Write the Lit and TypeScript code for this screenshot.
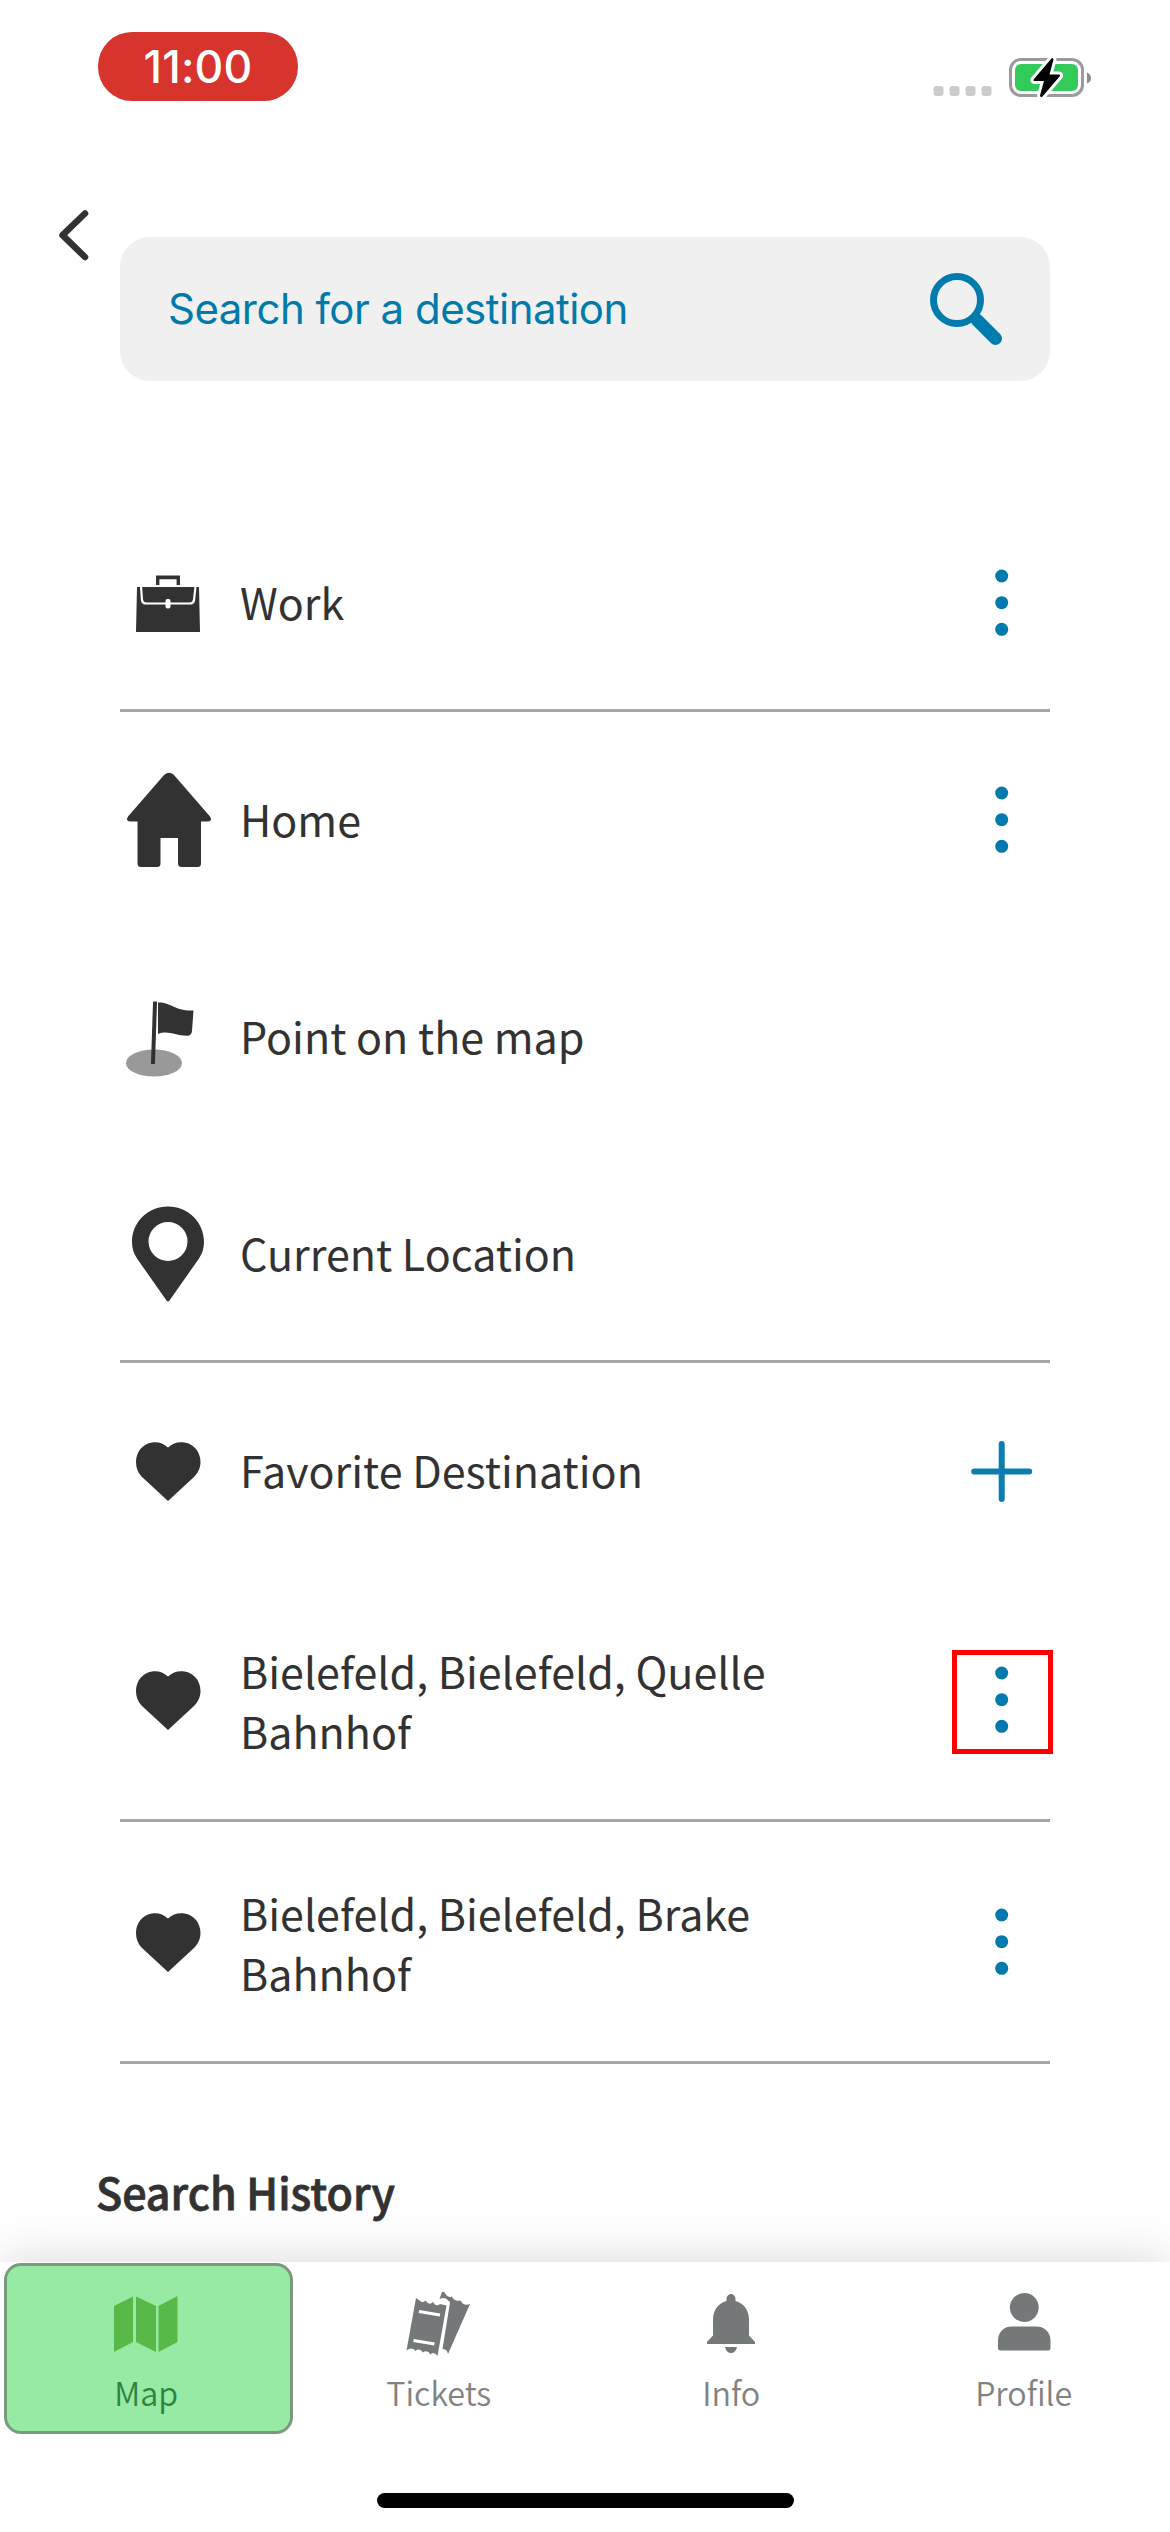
import { LitElement, html, css, svg, TemplateResult } from "lit";
import { customElement } from "lit/decorators.js";
import { classMap } from "lit/directives/class-map.js";

type Action = "menu" | "add" | "none";

interface Entry {
  icon: keyof typeof glyphs;
  label: string;
  action: Action;
  divider?: boolean;
  marked?: boolean;
}

const glyphs = {
  work: svg`
    <path d="M36 37V27.5H60V37H56.6V31.2H39.4V37Z" />
    <path d="M17 39H79L80 84H16Z" />
    <path d="M21 38.5L22 52Q22.5 55.5 26 55.5H70Q73.500 55.5 74 52L75.500 38.5" fill="none" stroke="#fff" stroke-width="2.200" />
    <rect x="45.500" y="51" width="5" height="9.500" rx="2" fill="#fff" />`,
  home: svg`
    <path d="M44.500 9.500Q49 6 53.500 9.500L90 51.500Q93 56.500 87 56.500H81V98.500Q81 102 77.500 102H62Q58 102 58 98.500V73H40.500V98.500Q40.500 102 37 102H21Q17.500 102 17.500 98.500V56.500H11Q5 56.500 8 51.500Z" />`,
  flag: svg`
    <ellipse cx="34" cy="81" rx="28" ry="13.500" fill="#999" />
    <path d="M35 21.500L33 80" stroke="#323232" stroke-width="4" stroke-linecap="square" fill="none" />
    <path d="M38 20.500C51 20 55 29.500 73.500 28.500L72 49Q71.500 54 67 53.800C55 53.500 48 48 38 52Z" />`,
  pin: svg`
    <path fill-rule="evenodd" d="M48 7.500C28 7.500 12 23 12 43C12 49 13.500 54 17 59.500L46.500 101.500Q48 103.500 49.500 101.500L79 59.500C82.500 54 84 49 84 43C84 23 68 7.500 48 7.500ZM48 23A19.500 19.500 0 1 1 48 62A19.500 19.500 0 1 1 48 23Z" />`,
  heart: svg`
    <path d="M48 31.500C43 26.500 37 25.500 32 26.500C22.500 28 16 36 16 46C16 52 18 56.500 21.500 60.500L48 85L74.500 60.500C78 56.500 80.500 52 80.500 46C80.500 36 74 28 64.500 26.500C59 25.500 53 26.500 48 31.500Z" />`,
};

const actions: Record<Exclude<Action, "none">, TemplateResult> = {
  menu: svg`
    <circle cx="47.700" cy="28" r="6.500" />
    <circle cx="47.700" cy="54.700" r="6.500" />
    <circle cx="47.700" cy="81.300" r="6.500" />` as unknown as TemplateResult,
  add: svg`
    <path d="M47.700 28V83M20.200 55.500H75.200" stroke="#0a7eb0" stroke-width="6" stroke-linecap="round" fill="none" />` as unknown as TemplateResult,
};

const entries: Entry[] = [
  { icon: "work", label: "Work", action: "menu", divider: true },
  { icon: "home", label: "Home", action: "menu" },
  { icon: "flag", label: "Point on the map", action: "none" },
  { icon: "pin", label: "Current Location", action: "none", divider: true },
  { icon: "heart", label: "Favorite Destination", action: "add" },
  { icon: "heart", label: "Bielefeld, Bielefeld, Quelle Bahnhof", action: "menu", divider: true, marked: true },
  { icon: "heart", label: "Bielefeld, Bielefeld, Brake Bahnhof", action: "menu", divider: true },
];

const tabs = [
  {
    label: "Map",
    icon: svg`
      <path d="M8 24L27 14.500V60L8 70Z" />
      <path d="M30 14.500L50 24V70L30 60Z" />
      <path d="M52.500 24L71.500 14V60L52.500 70Z" />`,
  },
  {
    label: "Tickets",
    icon: svg`
      <path d="M43 10Q45.500 9 46.500 12Q49 16.500 53 14.500Q55.500 20 61.500 18.500Q64.500 24.500 71 22L49 72Q48 67 43.500 67L51 20.500Q51 19 49.500 19Q47 14.500 40.500 17Z" />
      <path d="M17 16L20 18Q23.500 22 26.500 18.500Q30 24 34 20Q37 25.500 41 22L47.500 23.500L38.500 74Q35 69 31.500 72.500Q28 67 24 70.500Q20.500 65.500 16.500 69Q13 64.500 7.500 68.500Z" />
      <path d="M20 29.500L41 33M14.500 58.500L35.500 62" stroke="#fff" stroke-width="3.200" fill="none" />`,
  },
  {
    label: "Info",
    icon: svg`
      <path d="M35.500 19V17A4.500 5 0 0 1 44.500 17V19C52.500 21 58 28 58 37.500V53.500L64 60V62H16V60L22 53.500V37.500C22 28 27.500 21 35.500 19Z" />
      <path d="M34 65H46Q44.500 71 40 71Q35.500 71 34 65Z" />`,
  },
  {
    label: "Profile",
    icon: svg`
      <circle cx="40.300" cy="25.500" r="14.400" />
      <path d="M14 66V58.500C14 50.500 19.500 44.500 27.500 44.500H52.500C60.500 44.500 66.500 50.500 66.500 58.500V66Q66.500 68.500 64 68.500H16.500Q14 68.500 14 66Z" />`,
  },
];

@customElement("app-root")
export class AppRoot extends LitElement {
  static styles = css`
    :host {
      display: flex;
      flex-direction: column;
      width: 1170px;
      height: 2532px;
      overflow: hidden;
      background: #fff;
      color: #323232;
      font-family: "Noto Sans CJK JP", "Noto Sans", sans-serif;
    }
    * {
      box-sizing: border-box;
    }
    svg {
      display: block;
      flex: none;
    }
    .status {
      display: flex;
      justify-content: space-between;
      height: 210px;
      padding: 32px 79px 0 98px;
    }
    .time {
      width: 200px;
      height: 69px;
      border-radius: 34px;
      background: #d7342d;
      color: #fff;
      font: 500 44.5px/70px Inter, sans-serif;
      text-align: center;
      letter-spacing: 0.2px;
    }
    .indicators {
      display: flex;
      gap: 17px;
      padding-top: 23px;
    }
    .top {
      display: flex;
      padding: 0 120px 0 56px;
    }
    .back {
      width: 64px;
    }
    .search {
      display: flex;
      flex: 1;
      align-items: center;
      justify-content: space-between;
      height: 144px;
      margin-top: 27px;
      padding: 0 42px 0 48px;
      border-radius: 30px;
      background: #f0f0f0;
    }
    .placeholder {
      color: #007aab;
      font: 400 42px/60px Inter, sans-serif;
      letter-spacing: -0.52px;
    }
    .list {
      display: flex;
      flex-direction: column;
      padding: 114px 120px 0;
    }
    .row {
      display: flex;
      align-items: center;
      height: 217px;
      border-bottom: 3px solid transparent;
    }
    .row.divider {
      border-bottom-color: #a5a6a6;
    }
    .row.tall {
      height: 242px;
    }
    .label {
      flex: 1;
      padding: 0 40px 2px 24px;
      font-size: 43px;
      line-height: 60px;
    }
    .row.tall .label {
      padding-bottom: 0;
    }
    .icon {
      fill: #323232;
    }
    .row.tall svg {
      margin-bottom: 1px;
    }
    .action {
      position: relative;
      fill: #0079ad;
    }
    .marker {
      position: absolute;
      left: -2px;
      top: 5px;
      width: 101px;
      height: 104px;
      border: 5px solid #fe0000;
    }
    .history {
      flex: 1;
      margin: 0;
      padding: 97px 96px 0;
      font-size: 43px;
      font-weight: 500;
      -webkit-text-stroke: 0.8px #323232;
      line-height: 60px;
    }
    .tabbar {
      display: flex;
      flex-direction: column;
      align-items: center;
      height: 270px;
      flex: none;
      background: #fff;
      box-shadow: 0 0 50px rgba(0, 0, 0, 0.16);
    }
    .tabs {
      display: grid;
      grid-template-columns: repeat(4, 1fr);
      width: 100%;
      height: 231px;
    }
    .tab {
      display: flex;
      flex-direction: column;
      align-items: center;
      height: 171px;
      margin: 1px 0 0 4px;
      padding: 19px 4px 0 0;
      border-radius: 17px;
      color: #828282;
      fill: #747878;
      font-size: 32.3px;
      font-weight: 350;
      line-height: 44px;
    }
    .tab.active {
      padding: 16px 4px 0 0;
      border: 3px solid #7a9a7d;
      background: #96eaa4;
      color: #2c8440;
      fill: #57b947;
    }
    .tab-label {
      margin-top: 8px;
    }
    .grabber {
      width: 417px;
      height: 15px;
      border-radius: 8px;
      background: #000;
    }
  `;

  private renderEntry(entry: Entry) {
    const tall = entry.label.length > 24;
    return html`
      <div class=${classMap({ row: true, divider: !!entry.divider, tall })}>
        <svg class="icon" width="96" height="108" viewBox="0 0 96 108">${glyphs[entry.icon]}</svg>
        <div class="label">${entry.label}</div>
        ${entry.action === "none"
          ? null
          : html`<div class="action">
              <svg width="96" height="108" viewBox="0 0 96 108">${actions[entry.action]}</svg>
              ${entry.marked ? html`<div class="marker"></div>` : null}
            </div>`}
      </div>
    `;
  }

  render() {
    return html`
      <div class="status">
        <div class="time">11:00</div>
        <div class="indicators">
          <svg width="60" height="50" viewBox="0 0 60 50" fill="#cbcbcb">
            <rect x="1.500" y="31" width="10" height="10" rx="3" />
            <rect x="17.500" y="31" width="10" height="10" rx="3" />
            <rect x="33.500" y="31" width="10" height="10" rx="3" />
            <rect x="49.500" y="31" width="10" height="10" rx="3" />
          </svg>
          <svg width="82" height="48" viewBox="0 0 82 48">
            <rect x="1.500" y="4.500" width="72" height="36" rx="10.500" fill="none" stroke="#9b9b9d" stroke-width="3" />
            <rect x="6" y="9" width="63" height="27" rx="6" fill="#32cb5a" />
            <path d="M78 17.500Q82 19 82 23T78 28.500Z" fill="#8c8c8e" />
            <path d="M42.500 3.500L24.500 24.500Q24 26 25.500 26H35L31 40.500Q31.500 43 33.500 41.500L51 21Q51.500 19.500 50 19.500H40.500L44.500 4.500Q44 2 42.500 3.500Z" fill="#000" stroke="#fff" stroke-width="6" stroke-linejoin="round" paint-order="stroke" />
          </svg>
        </div>
      </div>

      <div class="top">
        <div class="back">
          <svg width="40" height="56" viewBox="0 0 40 56">
            <path d="M29 3.500L6.500 25.200L29 47" fill="none" stroke="#323232" stroke-width="6.500" stroke-linecap="round" stroke-linejoin="round" />
          </svg>
        </div>
        <div class="search">
          <div class="placeholder">Search for a destination</div>
          <svg width="84" height="84" viewBox="0 0 84 84" fill="none" stroke="#007bae">
            <circle cx="33" cy="33" r="23.500" stroke-width="7" />
            <path d="M53 53L71.500 71.500" stroke-width="13" stroke-linecap="round" />
          </svg>
        </div>
      </div>

      <div class="list">${entries.map((entry) => this.renderEntry(entry))}</div>

      <h2 class="history">Search History</h2>

      <div class="tabbar">
        <div class="tabs">
          ${tabs.map(
            (tab, i) => html`
              <div class=${classMap({ tab: true, active: i === 0 })}>
                <svg width="80" height="80" viewBox="0 0 80 80">${tab.icon}</svg>
                <div class="tab-label">${tab.label}</div>
              </div>
            `
          )}
        </div>
        <div class="grabber"></div>
      </div>
    `;
  }
}
